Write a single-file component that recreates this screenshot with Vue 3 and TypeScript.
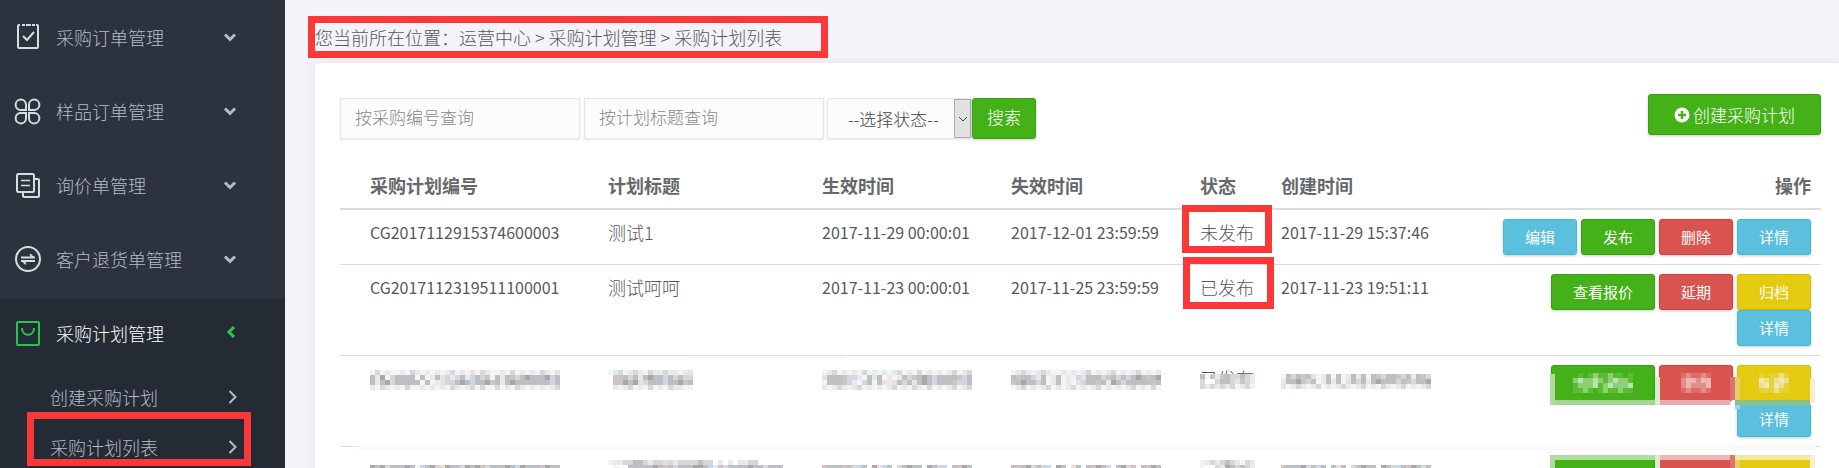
<script setup lang="ts">
import { ref } from 'vue'

interface MenuItem {
  label: string
  icon: string
  active?: boolean
  children?: { label: string; marked?: boolean }[]
}
interface Action {
  label: string
  tone: 'green' | 'red' | 'blue' | 'yellow'
  masked?: string[]
}
interface Plan {
  id: string
  title: string
  start: string
  end: string
  status: string
  created: string
  mark?: string
  actions: Action[]
}

const menu: MenuItem[] = [
  { label: '采购订单管理', icon: 'order' },
  { label: '样品订单管理', icon: 'clover' },
  { label: '询价单管理', icon: 'copy' },
  { label: '客户退货单管理', icon: 'swap' },
  {
    label: '采购计划管理',
    icon: 'bag',
    active: true,
    children: [{ label: '创建采购计划' }, { label: '采购计划列表', marked: true }],
  },
]

const plans: Plan[] = [
  {
    id: 'CG2017112915374600003',
    title: '测试1',
    start: '2017-11-29 00:00:01',
    end: '2017-12-01 23:59:59',
    status: '未发布',
    created: '2017-11-29 15:37:46',
    mark: 'mark-first',
    actions: [
      { label: '编辑', tone: 'blue' },
      { label: '发布', tone: 'green' },
      { label: '删除', tone: 'red' },
      { label: '详情', tone: 'blue' },
    ],
  },
  {
    id: 'CG2017112319511100001',
    title: '测试呵呵',
    start: '2017-11-23 00:00:01',
    end: '2017-11-25 23:59:59',
    status: '已发布',
    created: '2017-11-23 19:51:11',
    mark: 'mark-second',
    actions: [
      { label: '查看报价', tone: 'green' },
      { label: '延期', tone: 'red' },
      { label: '归档', tone: 'yellow' },
      { label: '详情', tone: 'blue' },
    ],
  },
]

// Redacted cells are drawn as 5px blocks, one letter per block.
const palette: Record<string, string> = {
  a: '#f5f4f4', b: '#e7e9eb', c: '#d6d7d9', d: '#bebfc2', e: '#a9a7a8',
  f: '#ccd8e8', g: '#ece0d9', h: '#b9c2be', k: '#cdc4c3',
  1: '#8fcf74', 2: '#5cbb36', 3: '#b9e3ad', 4: '#efb5b4', 5: '#e58b88', 6: '#de6e6a',
  7: '#eee08a', 8: '#f3e9ad', 9: '#e7d338',
}

const hiddenRow = {
  id: [
    'acabaabacbabababcabagacbaabacababacbag',
    'dbeacddddadabdgfbcdbfhckadbdkcdedddefd',
    'dbdecdddddadabgfcdedfhdekdbdedddddddfd',
    'bacbabacaabababacbabcacaacabacbabababc',
  ],
  title: ['abcabcbacbbcbbabg', '.kkdcdbdeddfdcdcc', '.kkedegcdddfddekd', '.babcabacabacbbaa'],
  start: [
    'abcababacabababcabacabababcabc',
    'gdddkfcbahbhababdckdedcddddkfd',
    'adddkfbacdadgbgdcdgdedfdddkcfd',
    'babcbabcabababcabacbacababcabc',
  ],
  end: [
    'abcbabcbaabababcababcababcabab',
    'dkddcbhabdabafghddckdcdcdedkhe',
    'kdeddchabdabagfddkdbedcddhddkd',
    'abcababcababcababcabababcabaca',
  ],
  status: ['dakbkdccdcb', 'c..cddcgkfb', 'cbcbcbcabca'],
  created: [
    'adcdkdgabhadabdbdadkcddkcdbdkc',
    'bddekfdabhbhagdcdbdehddcdkcdde',
    'gabcbabcababcbabcabacbabcababc',
  ],
}

const lastRow = {
  id: ['', 'edecdddedafdecgeddcedekcdddedfedddkedd'],
  title: ['abbccddcbfcgcbccccdcc.b.b.bbcf', '.a..dddddedkdcdddeedfbkcddddeddcddd'],
  start: ['', 'kdddkdcfd.egfh.cdehd.edcf.dked'],
  end: ['', 'dkdecdcf.ed.gh.dkedc.deck.dked'],
  status: ['abcbcdcbacb', 'a..cbedcdcb'],
  created: ['', 'kdddecdfd.hgd.cdehd.edcfdkedcd'],
}

const hiddenActions: Action[] = [
  { label: '查看报价', tone: 'green', masked: ['.2.2122122.2', '131131213112', '211132131113', '2212.2122122'] },
  { label: '延期', tone: 'red', masked: ['656656', '544544', '545554', '656656'] },
  { label: '归档', tone: 'yellow', masked: ['9.9979', '879787', '789879', '999799'] },
  { label: '详情', tone: 'blue' },
]
const clippedActions = hiddenActions.slice(0, 3)

function blocks(rows: string[]) {
  return rows.flatMap((row, y) =>
    [...row].map((c, x) => ({ x: x * 5, y: y * 5, fill: palette[c] ?? 'none' })).filter((b) => b.fill !== 'none'),
  )
}
const widthOf = (rows: string[]) => Math.max(...rows.map((r) => r.length)) * 5

const code = ref('')
const title = ref('')
const status = ref('')
const dateKeys = ['id', 'title', 'start', 'end'] as const
</script>

<template>
  <div class="shell">
    <nav class="sidebar">
      <section v-for="item in menu" :key="item.label" class="group" :class="{ active: item.active }">
        <a href="#" class="entry">
          <svg class="icon" viewBox="0 0 26 26" fill="none" stroke="currentColor" stroke-width="2">
            <g v-if="item.icon === 'order'">
              <path d="M6 1H5a1 1 0 0 0-1 1v21a1 1 0 0 0 1 1h18a1 1 0 0 0 1-1V2a1 1 0 0 0-1-1h-1M8 1h3M12 1h5M18 1h3" />
              <path d="M9 12l4 4 7-8" />
            </g>
            <g v-else-if="item.icon === 'clover'">
              <path d="M12 12V6.500A5.200 5.200 0 1 0 6.500 12ZM15 12V6.500A5.200 5.200 0 1 1 20 12ZM12 15v5.500A5.200 5.200 0 1 1 6.500 15ZM15 15v5.500A5.200 5.200 0 1 0 20 15Z" />
            </g>
            <g v-else-if="item.icon === 'copy'">
              <rect x="3" y="2" width="17" height="18" rx="1.500" />
              <path d="M20 7h4a1 1 0 0 1 1 1v16a1 1 0 0 1-1 1H10a1 1 0 0 1-1-1v-4" />
              <path d="M7 8.500h9M7 13.500h9" stroke-width="1.500" />
            </g>
            <g v-else-if="item.icon === 'swap'">
              <circle cx="14" cy="13" r="12" />
              <path d="M7 11.500h14M7 15h14" />
              <path d="M15.500 8h1.500l4 4h-4zM12.500 18.500H11l-4-4h4z" fill="currentColor" stroke="none" />
            </g>
            <g v-else>
              <rect x="3" y="2" width="22" height="23" rx="1" />
              <path d="M8 8c0 9 12 9 12 0" />
            </g>
          </svg>
          <span class="entry-label">{{ item.label }}</span>
          <svg class="caret" viewBox="0 0 14 14" fill="none" stroke="currentColor" stroke-width="3">
            <path v-if="item.active" d="M11 1 6 6l5 5" />
            <path v-else d="M2 4.500 7 9.500l5-5" />
          </svg>
        </a>
        <div v-if="item.children" class="children">
          <a v-for="child in item.children" :key="child.label" href="#" class="child" :class="{ marked: child.marked }">
            <span>{{ child.label }}</span>
            <svg class="caret" viewBox="0 0 14 14" fill="none" stroke="currentColor" stroke-width="2">
              <path d="M6.500 1 12.500 7 6.500 13" />
            </svg>
          </a>
        </div>
      </section>
    </nav>

    <main class="main">
      <div class="crumbs"><span class="crumb-frame">您当前所在位置：运营中心 &gt; 采购计划管理 &gt; 采购计划列表</span></div>

      <div class="card">
        <div class="toolbar">
          <form class="search" @submit.prevent>
            <input v-model="code" class="field" type="text" placeholder="按采购编号查询" aria-label="按采购编号查询" />
            <input v-model="title" class="field" type="text" placeholder="按计划标题查询" aria-label="按计划标题查询" />
            <div class="picker">
              <select v-model="status" aria-label="选择状态">
                <option value="">--选择状态--</option>
                <option value="0">未发布</option>
                <option value="1">已发布</option>
              </select>
              <span class="picker-arrow">
                <svg viewBox="0 0 10 6" width="10" height="6" fill="none" stroke="#444"><path d="M1 1l4 4 4-4" /></svg>
              </span>
            </div>
            <button type="submit" class="btn green submit">搜索</button>
          </form>
          <button type="button" class="btn green create">
            <svg viewBox="0 0 16 16" width="16" height="16">
              <circle cx="8" cy="8" r="7.500" fill="#fff" />
              <path d="M8 4v8M4 8h8" stroke="#43b117" stroke-width="2.500" />
            </svg>
            创建采购计划
          </button>
        </div>

        <table class="plans">
          <colgroup>
            <col class="c-id" /><col class="c-title" /><col class="c-date" /><col class="c-date" />
            <col class="c-status" /><col /><col class="c-actions" />
          </colgroup>
          <thead>
            <tr>
              <th>采购计划编号</th><th>计划标题</th><th>生效时间</th><th>失效时间</th>
              <th>状态</th><th>创建时间</th><th class="right">操作</th>
            </tr>
          </thead>
          <tbody>
            <tr v-for="plan in plans" :key="plan.id">
              <td>{{ plan.id }}</td>
              <td class="large">{{ plan.title }}</td>
              <td>{{ plan.start }}</td>
              <td>{{ plan.end }}</td>
              <td class="large"><span class="frame" :class="plan.mark">{{ plan.status }}</span></td>
              <td>{{ plan.created }}</td>
              <td>
                <div class="actions">
                  <button v-for="a in plan.actions" :key="a.label" type="button" class="btn small" :class="a.tone">{{ a.label }}</button>
                </div>
              </td>
            </tr>

            <tr class="smudge-short">
              <td v-for="key in dateKeys" :key="key">
                <svg class="mosaic" :width="widthOf(hiddenRow[key])" height="20" shape-rendering="crispEdges">
                  <rect v-for="(b, i) in blocks(hiddenRow[key])" :key="i" :x="b.x" :y="b.y" width="5" height="5" :fill="b.fill" />
                </svg>
              </td>
              <td class="large">
                <span class="covered">已发布
                  <svg class="cover" width="55" height="18" shape-rendering="crispEdges">
                    <rect width="55" height="18" fill="#fff" />
                    <rect v-for="(b, i) in blocks(hiddenRow.status)" :key="i" :x="b.x" :y="b.y" width="5" height="5" :fill="b.fill" />
                  </svg>
                </span>
              </td>
              <td>
                <svg class="mosaic low" :width="widthOf(hiddenRow.created)" height="15" shape-rendering="crispEdges">
                  <rect v-for="(b, i) in blocks(hiddenRow.created)" :key="i" :x="b.x" :y="b.y" width="5" height="5" :fill="b.fill" />
                </svg>
              </td>
              <td>
                <div class="actions">
                  <button v-for="a in hiddenActions" :key="a.label" type="button" class="btn small" :class="[a.tone, { wide: a.tone === 'green' }]" :aria-label="a.label">
                    <svg v-if="a.masked" :width="widthOf(a.masked)" height="20" shape-rendering="crispEdges">
                      <rect v-for="(b, i) in blocks(a.masked)" :key="i" :x="b.x" :y="b.y" width="5" height="5" :fill="b.fill" />
                    </svg>
                    <template v-else>{{ a.label }}</template>
                  </button>
                  <svg class="fringe" width="265" height="36" shape-rendering="crispEdges">
                    <path d="M0 0h5v31H0z" fill="#afdb9e" />
                    <path d="M5 26h100v5H5z" fill="#a5d494" />
                    <path d="M105 3h5v28h-5z" fill="#dcebd3" />
                    <path d="M110 26h70v5h-70z" fill="#e5adab" />
                    <path d="M180 3h5v23h-5z" fill="#dd736d" />
                    <path d="M185 3h5v23h-5z" fill="#e5cf6c" />
                    <path d="M185 26h75v5h-75z" fill="#8cc08a" />
                    <path d="M185 31h5v4h-5z" fill="#94d5e6" />
                    <path d="M260 4h3l2 2v22l-5 3z" fill="#f4efd2" />
                  </svg>
                </div>
              </td>
            </tr>

            <tr class="smudge-long">
              <td v-for="key in dateKeys" :key="key">
                <svg class="mosaic" :width="widthOf(lastRow[key])" height="20" shape-rendering="crispEdges">
                  <rect v-for="(b, i) in blocks(lastRow[key])" :key="i" :x="b.x" :y="b.y" width="5" height="5" :fill="b.fill" />
                </svg>
              </td>
              <td>
                <svg class="mosaic" :width="widthOf(lastRow.status)" height="20" shape-rendering="crispEdges">
                  <rect v-for="(b, i) in blocks(lastRow.status)" :key="i" :x="b.x" :y="b.y" width="5" height="5" :fill="b.fill" />
                </svg>
              </td>
              <td>
                <svg class="mosaic" :width="widthOf(lastRow.created)" height="20" shape-rendering="crispEdges">
                  <rect v-for="(b, i) in blocks(lastRow.created)" :key="i" :x="b.x" :y="b.y" width="5" height="5" :fill="b.fill" />
                </svg>
              </td>
              <td>
                <div class="actions">
                  <button v-for="a in clippedActions" :key="a.label" type="button" class="btn small" :class="[a.tone, { wide: a.tone === 'green' }]" :aria-label="a.label"></button>
                  <svg class="fringe top" width="265" height="36" shape-rendering="crispEdges">
                    <path d="M0 0h5v36H0z" fill="#afdb9e" />
                    <path d="M5 0h100v5H5z" fill="#b0dca2" />
                    <path d="M105 0h5v36h-5z" fill="#dcebd3" />
                    <path d="M110 0h70v5h-70z" fill="#f0b6b4" />
                    <path d="M180 0h5v36h-5z" fill="#dd736d" />
                    <path d="M185 0h75v5h-75z" fill="#f3e9a2" />
                    <path d="M185 5h5v31h-5z" fill="#e5cf6c" />
                    <path d="M260 0h5v36h-5z" fill="#f4efd2" />
                  </svg>
                </div>
              </td>
            </tr>
          </tbody>
        </table>
      </div>
    </main>
  </div>
</template>

<style>
body {
  background: #f4f3f9;
  overflow: hidden;
}
</style>

<style scoped>
* {
  box-sizing: border-box;
}
.shell {
  display: flex;
  height: 100vh;
  overflow: hidden;
  font-family: "Noto Sans CJK SC", "Noto Sans", sans-serif;
  font-weight: 300;
  font-size: 18px;
  line-height: 26px;
  color: #55585b;
}
.sidebar {
  flex: 0 0 285px;
  padding-top: 3px;
  background: #2c323e;
}
.entry,
.child {
  display: flex;
  align-items: center;
  color: #b4bcc7;
  text-decoration: none;
}
.entry {
  height: 74px;
  padding: 0 48px 6px 14px;
}
.icon {
  flex: none;
  width: 26px;
  height: 26px;
  margin-right: 16px;
  color: #d5dde3;
  overflow: visible;
}
.caret {
  flex: none;
  width: 14px;
  height: 14px;
  margin-left: auto;
}
.active {
  background: #252b35;
  height: 100%;
}
.active .entry-label {
  color: #fff;
}
.active .entry .icon,
.active .entry .caret {
  color: #24c64f;
}
.child {
  position: relative;
  height: 50px;
  padding: 0 48px 2px 50px;
}
.marked::after {
  content: "";
  position: absolute;
  inset: -11px 34px 7px 27px;
  border: 7px solid #fb3838;
}
.main {
  flex: 1;
  min-width: 0;
  padding-left: 30px;
}
.crumbs {
  padding: 24px 0 13px;
}
.crumb-frame,
.frame,
.covered {
  position: relative;
  display: inline-block;
  white-space: nowrap;
}
.crumb-frame {
  display: block;
  width: 465px;
}
.crumb-frame::after,
.frame::after {
  content: "";
  position: absolute;
  border: 7px solid #fb3838;
}
.crumb-frame::after {
  inset: -8px -48px -8px -7px;
}
.mark-first::after {
  inset: -14px -18px -8px -18px;
}
.mark-second::after {
  inset: -17px -20px -9px -17px;
}
.card {
  min-height: 100vh;
  padding: 31px 18px 0 25px;
  background: #fff;
  border-radius: 4px 0 0 0;
  box-shadow: 0 0 10px rgba(60, 50, 100, 0.08);
}
.toolbar {
  display: flex;
  justify-content: space-between;
  align-items: flex-start;
}
.search {
  display: flex;
  margin-top: 4px;
}
.field,
.picker {
  height: 41px;
  background: #fcfcfc;
  border: 1px solid #e5e6e7;
  box-shadow: 0 1px 2px rgba(0, 0, 0, 0.1);
}
.field {
  width: 240px;
  margin-right: 4px;
  padding: 0 14px 4px;
  font: inherit;
  font-size: 17px;
  color: #555;
}
.field + .picker {
  margin-left: -1px;
}
.field::placeholder {
  color: #888;
}
.picker {
  display: flex;
  width: 145px;
  border-radius: 3px;
}
.picker select {
  flex: 1;
  min-width: 0;
  padding: 0 0 0 20px;
  appearance: none;
  border: 0;
  background: transparent;
  font: inherit;
  font-size: 17px;
  color: #444;
}
.picker-arrow {
  display: flex;
  flex: 0 0 17px;
  align-items: center;
  justify-content: center;
  background: #e1e1e1;
  border: 1px solid #adadad;
}
.btn {
  display: inline-flex;
  align-items: center;
  justify-content: center;
  border: 1px solid;
  border-radius: 3px;
  font: inherit;
  font-size: 17px;
  color: #fff;
  white-space: nowrap;
  box-shadow: 0 1px 3px rgba(0, 0, 0, 0.2);
}
.green {
  background: #43b117;
  border-color: #3aa012;
}
.red {
  background: #d9534f;
  border-color: #d43f3a;
}
.blue {
  background: #5bc0de;
  border-color: #46b8da;
}
.yellow {
  background: #e4cb10;
  border-color: #d5bd0c;
}
.submit {
  width: 64px;
  height: 41px;
  padding: 0 0 3px;
}
.create {
  gap: 3px;
  width: 173px;
  height: 41px;
  padding: 0;
}
.plans {
  width: 100%;
  margin-top: 25px;
  table-layout: fixed;
  border-collapse: separate;
  border-spacing: 0;
}
.c-id {
  width: 258px;
}
.c-title {
  width: 214px;
}
.c-date {
  width: 189px;
}
.c-status {
  width: 81px;
}
.c-actions {
  width: 338px;
}
th,
td {
  padding: 9px 10px;
  text-align: left;
  vertical-align: top;
  white-space: nowrap;
}
th {
  padding-top: 8px;
  padding-bottom: 10px;
  border-bottom: 2px solid #ddd;
  color: #65686b;
  font-weight: 700;
}
td {
  font-size: 16px;
  font-weight: 400;
}
th:first-child,
td:first-child {
  padding-left: 30px;
}
tbody tr + tr td {
  border-top: 1px solid #ddd;
}
td.large {
  font-size: 18px;
  font-weight: 300;
}
.right {
  text-align: right;
}
.actions {
  position: relative;
  display: flex;
  flex-wrap: wrap;
  justify-content: flex-end;
  column-gap: 4px;
}
.small {
  min-width: 74px;
  height: 36px;
  padding: 0 21px;
  font-size: 15px;
}
.wide {
  width: 104px;
  padding: 0;
}
.mosaic {
  display: block;
  margin: 5px 0 0;
}
.low {
  margin-top: 9px;
}
.smudge-long .mosaic {
  margin-top: 4px;
}
.cover {
  position: absolute;
  left: 0;
  top: 9px;
}
.fringe {
  position: absolute;
  right: -4px;
  top: 9px;
}
.fringe.top {
  top: -1px;
}
.smudge-short td,
.smudge-long td {
  position: relative;
}
.smudge-short td:nth-child(2)::before,
.smudge-short td:nth-child(3)::before,
.smudge-long td::before {
  content: "";
  position: absolute;
  top: -2px;
  left: 0;
  right: 0;
  height: 5px;
  background: #f9f9f9;
}
.smudge-short td:nth-child(2)::before {
  top: 0;
  left: 92px;
  height: 3px;
}
.smudge-short td:nth-child(3)::before {
  top: 0;
  right: auto;
  width: 33px;
  height: 3px;
}
.smudge-long td:first-child::before {
  left: 19px;
}
.smudge-long td:last-child::before {
  right: 5px;
}
</style>
